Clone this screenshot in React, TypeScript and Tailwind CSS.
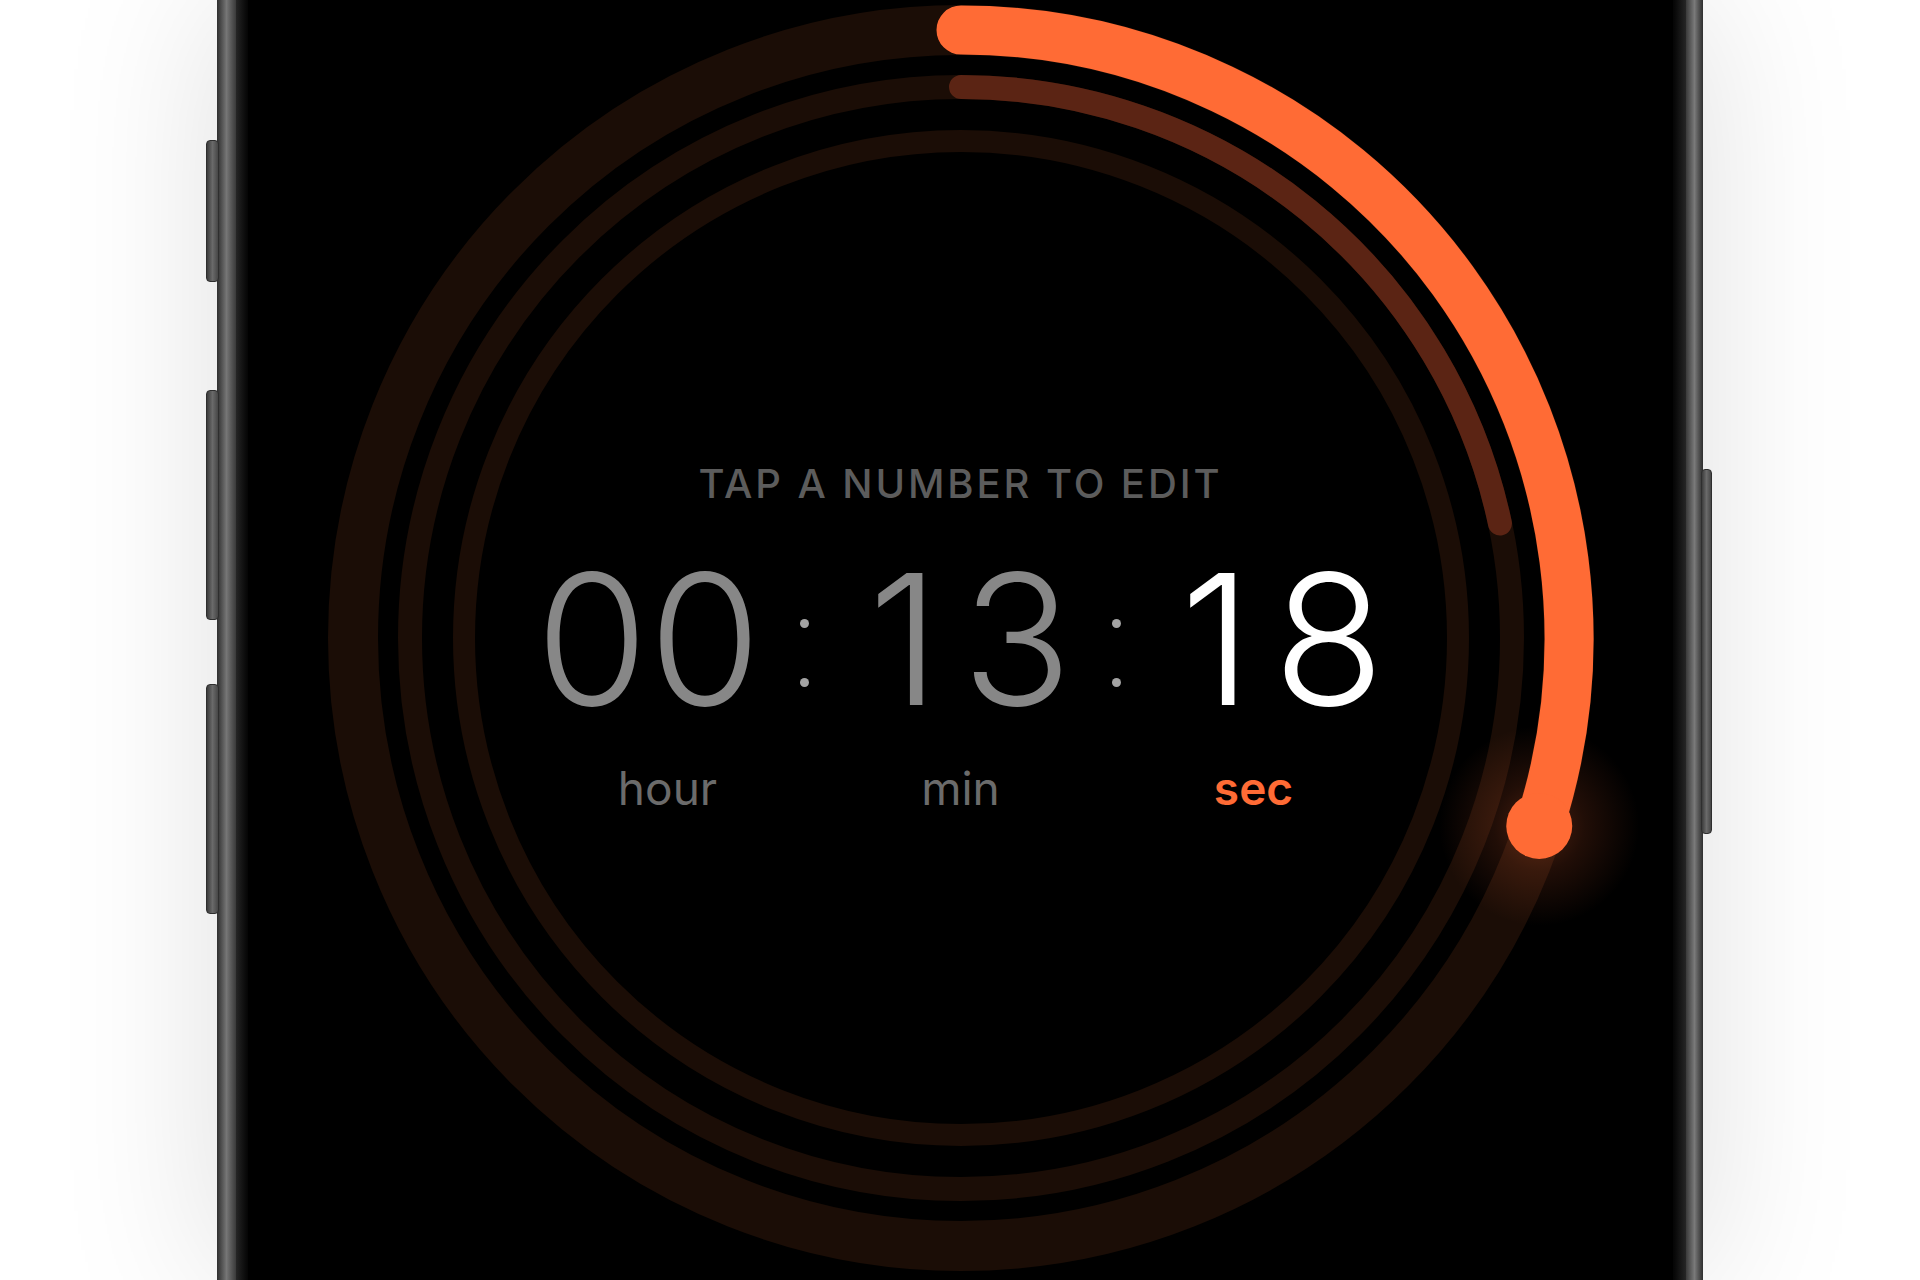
const ORANGE = "#ff6b35";
const TRACK = "#1b0d06";

// ring geometry inside the 1280x1280 dial
const CX = 640;
const CY = 638;

const polar = (r: number, deg: number) => {
  const a = (deg * Math.PI) / 180;
  return { x: CX + r * Math.sin(a), y: CY - r * Math.cos(a) };
};

const arcPath = (r: number, deg: number) => {
  const s = polar(r, 0);
  const e = polar(r, deg);
  const large = deg > 180 ? 1 : 0;
  return `M ${s.x} ${s.y} A ${r} ${r} 0 ${large} 1 ${e.x} ${e.y}`;
};

const hours = 0;
const minutes = 13;
const seconds = 18;

const Dial = () => {
  const secDeg = (seconds / 60) * 360;
  const minDeg = (minutes / 60) * 360;
  const knob = polar(608, secDeg);

  return (
    <svg width={1280} height={1280} viewBox="0 0 1280 1280" className="overflow-visible [grid-area:1/1]">
      <defs>
        <radialGradient id="knobGlow">
          <stop offset="0%" stopColor={ORANGE} stopOpacity={0.3} />
          <stop offset="45%" stopColor={ORANGE} stopOpacity={0.13} />
          <stop offset="100%" stopColor={ORANGE} stopOpacity={0} />
        </radialGradient>
      </defs>

      {/* tracks */}
      <circle cx={CX} cy={CY} r={608} fill="none" stroke={TRACK} strokeWidth={50} />
      <circle cx={CX} cy={CY} r={551} fill="none" stroke={TRACK} strokeWidth={24} />
      <circle cx={CX} cy={CY} r={497} fill="none" stroke={TRACK} strokeWidth={22} />

      <circle cx={knob.x} cy={knob.y} r={100} fill="url(#knobGlow)" />

      {/* progress */}
      {hours > 0 && (
        <path d={arcPath(497, (hours / 24) * 360)} fill="none" stroke="#3a1709" strokeWidth={22} strokeLinecap="round" />
      )}
      <path d={arcPath(551, minDeg)} fill="none" stroke="#5b2414" strokeWidth={24} strokeLinecap="round" />
      <path d={arcPath(608, secDeg)} fill="none" stroke={ORANGE} strokeWidth={49} strokeLinecap="round" />
      <circle cx={knob.x} cy={knob.y} r={33} fill={ORANGE} />
    </svg>
  );
};

const Colon = () => (
  <div className="flex w-[52px] flex-col items-center gap-[50px] pt-[71px]">
    <span className="h-[9px] w-[9px] rounded-full bg-[#a3a3a3]" />
    <span className="h-[9px] w-[9px] rounded-full bg-[#a3a3a3]" />
  </div>
);

// fixed-width digit cells so "1" keeps its plain shape but lines up like the others
const Value = ({ value, className }: { value: number; className: string }) => (
  <span className={`flex w-[260px] justify-center ${className}`}>
    {String(value)
      .padStart(2, "0")
      .split("")
      .map((d, i) => (
        <span key={i} className="w-[113px] text-center">
          {d}
        </span>
      ))}
  </span>
);

const Readout = () => (
  <div className="z-10 flex flex-col items-center pt-[464px] font-['Inter',sans-serif] [grid-area:1/1]">
    <p className="text-[40px] leading-none font-medium tracking-[2.9px] text-[#5c5c5c]">TAP A NUMBER TO EDIT</p>

    <div className="mt-[44px] flex h-[180px] text-[182px] leading-none font-[260]">
      <Value value={hours} className="text-[#878787]" />
      <Colon />
      <Value value={minutes} className="text-[#878787]" />
      <Colon />
      <Value value={seconds} className="text-white" />
    </div>

    <div className="mt-[37px] flex text-[46px] leading-none">
      <span className="w-[293px] text-center text-[#6b6b6b]">hour</span>
      <span className="w-[293px] text-center text-[#6b6b6b]">min</span>
      <span className="w-[293px] text-center font-semibold text-[#ff6b35]">sec</span>
    </div>
  </div>
);

const SideButton = ({ className }: { className: string }) => (
  <div
    className={`absolute rounded-[4px] border border-[#2e2e2e] bg-gradient-to-r from-[#3c3c3c] via-[#6a6a6a] to-[#474747] ${className}`}
  />
);

export default function App() {
  return (
    <div className="flex h-[1280px] w-full justify-center overflow-hidden bg-white">
      <div className="relative flex h-full w-[1486px] shadow-[0_0_150px_rgba(0,0,0,0.13)]">
        <SideButton className="left-[-11px] top-[140px] h-[142px] w-[13px]" />
        <SideButton className="left-[-11px] top-[390px] h-[230px] w-[13px]" />
        <SideButton className="left-[-11px] top-[684px] h-[230px] w-[13px]" />
        <SideButton className="right-[-9px] top-[469px] h-[365px] w-[11px]" />

        {/* frame, left */}
        <div className="w-[19px] bg-gradient-to-r from-[#2f2f2f] via-[#767676] to-[#3a3a3a]" />
        <div className="w-[12px] bg-gradient-to-r from-[#262626] to-[#050505]" />

        {/* screen */}
        <div className="flex flex-1 justify-center overflow-hidden bg-black">
          <div className="grid h-[1280px] w-[1280px] shrink-0">
            <Dial />
            <Readout />
          </div>
        </div>

        {/* frame, right */}
        <div className="w-[13px] bg-gradient-to-r from-[#050505] to-[#262626]" />
        <div className="w-[17px] bg-gradient-to-r from-[#3a3a3a] via-[#7a7a7a] to-[#2f2f2f]" />
      </div>
    </div>
  );
}
